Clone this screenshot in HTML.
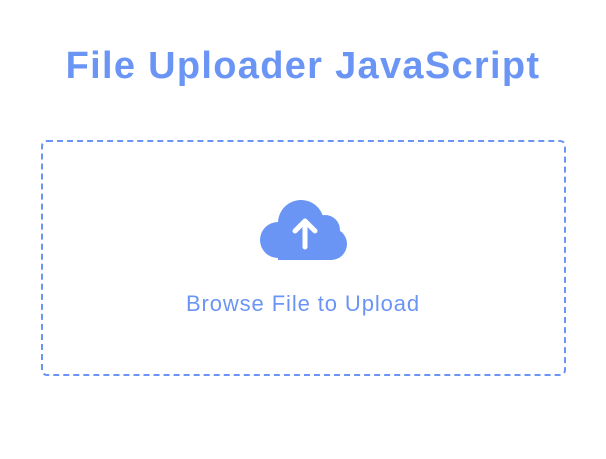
<!DOCTYPE html>
<html><head><style>
html,body{margin:0;padding:0;background:#fff;width:606px;height:459px;overflow:hidden;font-family:"Liberation Sans",sans-serif;}
h1{position:absolute;left:0;width:606px;top:43px;margin:0;text-align:center;font-size:38px;font-weight:bold;color:#6b95f5;letter-spacing:1.3px;line-height:46px;}
.box{position:absolute;left:41px;top:140px;width:521px;height:232px;border:2px dashed #6b95f5;border-radius:6px;}
.cloud{position:absolute;left:259px;top:199px;}
.t{position:absolute;left:0;width:606px;top:291px;text-align:center;font-size:22px;color:#6b95f5;line-height:26px;letter-spacing:0.9px;}
</style></head><body>
<h1>File Uploader JavaScript</h1>
<div class="box"></div>
<svg class="cloud" width="90" height="63" viewBox="0 0 90 63">
<g fill="#6b95f5">
<circle cx="42" cy="24" r="23"/>
<circle cx="66" cy="31" r="15"/>
<circle cx="19" cy="41" r="18"/>
<circle cx="72" cy="45" r="16"/>
<rect x="19" y="30" width="54" height="31"/>
</g>
<path d="M46 48 V23 M36 32 L46 22 L56 32" stroke="#fff" stroke-width="5" fill="none" stroke-linecap="round" stroke-linejoin="round"/>
</svg>
<div class="t">Browse File to Upload</div>
</body></html>
